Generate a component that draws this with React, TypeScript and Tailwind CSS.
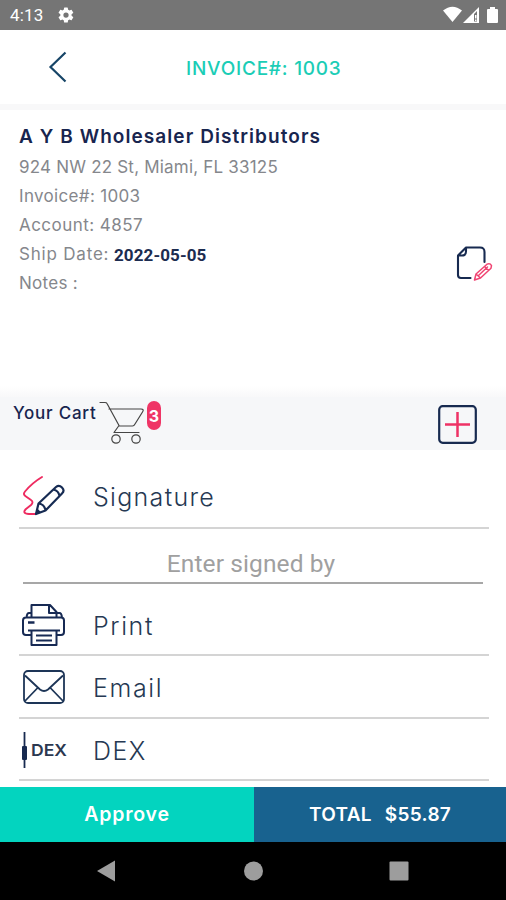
import type { ReactNode } from "react";

const details = [
  { text: "924 NW 22 St, Miami, FL 33125", className: "tracking-[0.2px]" },
  { text: "Invoice#: 1003", className: "tracking-[0.33px]" },
  { text: "Account: 4857", className: "tracking-[0.45px]" },
];

function StatusBar() {
  return (
    <div className="flex h-[30px] shrink-0 items-center bg-[#757575] pl-[10px] pr-[7px] text-white">
      <span className="w-[47px] pt-px font-['Roboto',sans-serif] text-[17px] leading-none tracking-[0.2px]">4:13</span>
      <svg width="18" height="18" viewBox="0 0 24 24" fill="currentColor">
        <path d="M19.4 13a7.8 7.8 0 0 0 0-2l2.1-1.6a.5.5 0 0 0 .1-.7l-2-3.4a.5.5 0 0 0-.6-.2l-2.5 1a7.3 7.3 0 0 0-1.7-1l-.4-2.6a.5.5 0 0 0-.5-.5h-4a.5.5 0 0 0-.5.5L9 5.1a7.3 7.3 0 0 0-1.7 1l-2.5-1a.5.5 0 0 0-.6.2l-2 3.4a.5.5 0 0 0 .1.7L4.5 11a7.8 7.8 0 0 0 0 2l-2.2 1.6a.5.5 0 0 0-.1.7l2 3.4c.1.2.4.3.6.2l2.5-1c.5.4 1.1.7 1.7 1l.4 2.6c0 .3.2.5.5.5h4c.3 0 .5-.2.5-.5l.4-2.6c.6-.3 1.2-.6 1.7-1l2.5 1c.2.1.5 0 .6-.2l2-3.4a.5.5 0 0 0-.1-.7ZM12 15.500a3.5 3.5 0 1 1 0-7 3.5 3.5 0 0 1 0 7Z" />
      </svg>
      <svg className="ml-auto" width="56" height="18" viewBox="0 0 56 18" fill="currentColor">
        <path d="M0 4.600Q9.500-3 19 4.600L9.500 16Z" />
        <path fillRule="evenodd" d="M20 17 36 1v16ZM31 8v7.500h3V5Z" />
        <path d="M32 9h1.500v3.500H32ZM32 13.500h1.500V15H32Z" />
        <path d="M44 4q0-1 1-1h2V1h5v2h2q1 0 1 1v12q0 1-1 1h-9q-1 0-1-1Z" />
      </svg>
    </div>
  );
}

function NoteIcon() {
  return (
    <svg width="38" height="38" viewBox="0 0 38 38" fill="none" strokeLinecap="round" strokeLinejoin="round">
      <path d="M28.500 16V6Q28.500 1.500 24 1.500H10L2 9.500V29q0 3 3 3h9.500M10 1.500v4q0 4-4 4H2" stroke="#172a50" strokeWidth="2.100" />
      <path d="m18.500 34 1.500-6L31 18.200q3-1.500 4.500 1.500l-.5 2.500L24.500 32Zm1.500-6 4.500 4M28.500 20.500l4 4M22.500 29.500l9-8.500" stroke="#f04472" strokeWidth="1.500" />
    </svg>
  );
}

function CartIcon() {
  return (
    <svg className="mt-[4px]" width="46" height="44" viewBox="0 0 46 44" fill="none" stroke="#454545" strokeWidth="1.200" strokeLinecap="round" strokeLinejoin="round">
      <path d="M1 1.500h5q1.500 0 2 1l12 22-5 7h25M10 8h32q3.500 0 1.500 3L36 23q-1 2-2.500 2H20" />
      <circle cx="17" cy="38" r="4.200" />
      <circle cx="37" cy="38" r="4.200" />
    </svg>
  );
}

function SignatureIcon() {
  return (
    <svg width="44" height="42" viewBox="0 0 44 42" fill="none" strokeLinecap="round" strokeLinejoin="round">
      <path d="M20 2Q10 8 3 16.500q-2.500 3 1 5l5 3.500q3 2 0 5l-5 4q-4.500 4.500 3 5h6" stroke="#ee2b60" strokeWidth="1.900" />
      <path d="m14 39 2.500-10.500L34 12q3-2.500 6 .5t0 6L23.500 35.500Zm2.500-10.500q6 .5 7 7M31.500 14.500q5 1 6 6.500" stroke="#162b53" strokeWidth="2.200" />
      <path d="m14 39 1.300-5.500 4 4Z" fill="#162b53" />
    </svg>
  );
}

function PrintIcon() {
  return (
    <svg width="44" height="44" viewBox="0 0 44 44" fill="none" stroke="#172a54" strokeWidth="2" strokeLinejoin="round">
      <path d="M9.500 14V2H28l6.500 7v5M27 2v8h7.500M9.500 10H7q-2 0-2.500 4.500M34.500 10h3q2 0 2.500 4.500M9.500 32H4q-3 0-3-3V17.500q0-3 3-3h35q3 0 3 3V29q0 3-3 3h-4.500M6 27.500h32M9.500 27.500h25V42h-25ZM14 32.500h16M14 37.500h16" />
      <path d="M6 19.500h6.500" strokeWidth="2.500" />
    </svg>
  );
}

function EmailIcon() {
  return (
    <svg width="43" height="34" viewBox="0 0 43 34" fill="none" stroke="#1d3557" strokeWidth="1.800" strokeLinejoin="round">
      <rect x="2" y="1" width="40" height="32" rx="4" />
      <path d="m3 5.500 15 14q4 3 8 0l15-14M3 31l13-13.500M41 31 28 17.500" />
    </svg>
  );
}

function DexIcon() {
  return (
    <svg width="46" height="36" viewBox="0 0 46 36">
      <path d="M2.500 0v36" stroke="#172a50" strokeWidth="1.800" />
      <rect x="0" y="14" width="5" height="14" rx="1" fill="#172a50" />
      <text x="9" y="24" textLength="36" lengthAdjust="spacingAndGlyphs" fill="#2c3850" fontFamily="Inter, sans-serif" fontSize="16.500" fontWeight="600">DEX</text>
    </svg>
  );
}

function ActionRow({ icon, label, className, textClass }: { icon: ReactNode; label: string; className: string; textClass: string }) {
  return (
    <div className={`ml-[19px] mr-[17px] flex shrink-0 items-center border-b-2 border-[#d4d4d4] pr-4 ${className}`}>
      <div className="flex w-[74px] items-center pl-[3px]">{icon}</div>
      <span className={`pt-[3px] text-[25px] font-light leading-none text-[#263953] ${textClass}`}>{label}</span>
    </div>
  );
}

export default function App() {
  return (
    <div className="flex h-[900px] w-[506px] flex-col overflow-hidden bg-white font-['Inter',sans-serif]">
      <StatusBar />
      <header className="flex h-[74px] shrink-0 items-center">
        <button className="ml-[48px] flex w-[138px]" aria-label="Back">
          <svg width="20" height="32" viewBox="0 0 20 32" fill="none" stroke="#174567" strokeWidth="2.200">
            <path d="M17.500 1.500 2.500 16l15 14.500" />
          </svg>
        </button>
        <h1 className="whitespace-nowrap pt-[2px] text-[19px] font-medium leading-none tracking-[0.77px] text-[#1bcdb6]">INVOICE#: 1003</h1>
      </header>
      <div className="h-[6px] shrink-0 bg-[#f8f8f9]" />

      <section className="flex h-[276px] shrink-0 pl-[19px] pr-[12px] pt-[12px]">
        <div className="flex-1 whitespace-nowrap text-[17px] leading-[29px] text-[#85878c]">
          <h2 className="mb-[2px] text-[19px] font-semibold tracking-[1.07px] text-[#18254f]">A Y B Wholesaler Distributors</h2>
          {details.map(({ text, className }) => (
            <p key={text} className={className}>{text}</p>
          ))}
          <p className="flex">
            <span className="w-[95px] tracking-[0.8px]">Ship Date:</span>
            <span className="pt-[1px] font-['Roboto',sans-serif] text-[17px] font-bold leading-[28px] tracking-[0.1px] text-[#1c2c50]">2022-05-05</span>
          </p>
          <p className="tracking-[0.3px]">Notes :</p>
        </div>
        <div className="mt-[124px]"><NoteIcon /></div>
      </section>

      <div className="h-[11px] shrink-0 bg-gradient-to-b from-white to-[#f8f8f9]" />
      <section className="flex h-[53px] shrink-0 items-start bg-[#f6f7f9] pl-[13px]">
        <span className="w-[86px] whitespace-nowrap pt-[5px] text-[17px] font-medium leading-[22px] tracking-[0.75px] text-[#18254f]">Your Cart</span>
        <CartIcon />
        <span className="ml-[2px] mt-[4px] flex h-[29px] w-[14px] items-center justify-center rounded-full bg-[#ef3566] text-[16px] font-bold text-white">3</span>
        <button className="ml-auto mr-[29px] mt-[8px]" aria-label="Add item">
          <svg width="39" height="39" viewBox="0 0 39 39" fill="none">
            <rect x="1.200" y="1.200" width="36.600" height="36.600" rx="3.500" stroke="#172a50" strokeWidth="2.200" />
            <path d="M19.500 7v25M7 19.500h25" stroke="#ee3265" strokeWidth="2.500" />
          </svg>
        </button>
      </section>

      <ActionRow icon={<SignatureIcon />} label="Signature" className="h-[79px] pt-[14px]" textClass="tracking-[1.3px]" />
      <div className="mx-[23px] flex h-[55px] shrink-0 items-center justify-center border-b-2 border-[#a7a7a7] pt-[18px] font-['Roboto',sans-serif] text-[24.5px] leading-none text-[#a0a0a0]">
        <span className="-ml-[4px] tracking-[0.1px]">Enter signed by</span>
      </div>
      <ActionRow icon={<PrintIcon />} label="Print" className="h-[72px] pt-[11px]" textClass="tracking-[1.6px]" />
      <ActionRow icon={<EmailIcon />} label="Email" className="h-[63px]" textClass="tracking-[1.6px]" />
      <ActionRow icon={<DexIcon />} label="DEX" className="h-[62px] pt-[2px]" textClass="tracking-[1.5px]" />

      <footer className="mt-auto flex h-[55px] shrink-0 text-[19px] font-semibold text-white">
        <button className="w-[254px] bg-[#03d4bf] text-[19.5px] tracking-[0.8px]">Approve</button>
        <div className="flex flex-1 items-center justify-center gap-[13px] bg-[#18628f] pt-[2px] tracking-[0.3px]">
          <span>TOTAL</span>
          <span>$55.87</span>
        </div>
      </footer>
      <nav className="flex h-[58px] shrink-0 items-center bg-black pl-[96px] pr-[97px]">
        <svg width="313" height="22" viewBox="0 0 313 22" fill="#9d9d9d">
          <path d="M1 11 19 0.500v21Z" />
          <circle cx="157.500" cy="11" r="9.500" />
          <rect x="293.500" y="1.500" width="19" height="19" rx="1" />
        </svg>
      </nav>
    </div>
  );
}
